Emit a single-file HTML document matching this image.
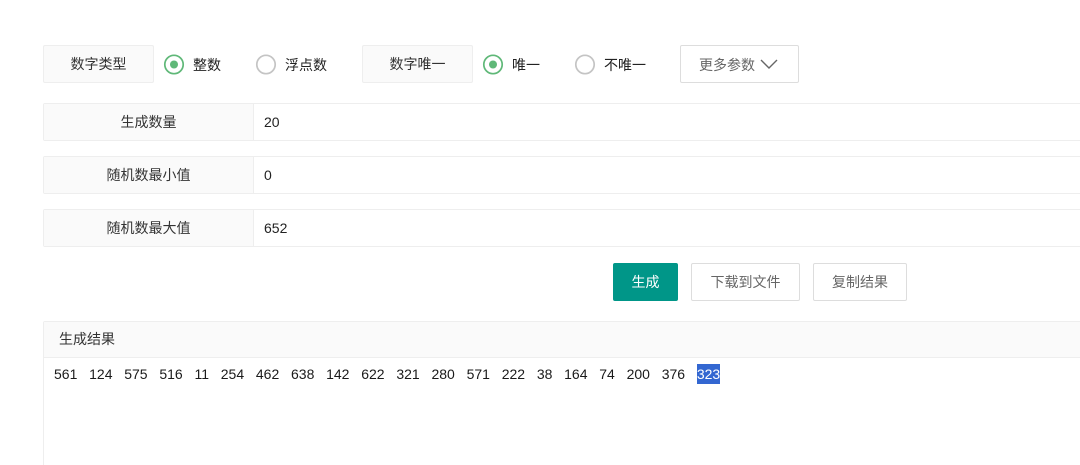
<!DOCTYPE html>
<html>
<head>
<meta charset="utf-8">
<style>
html,body{margin:0;padding:0;background:#fff;width:1080px;height:465px;overflow:hidden;}
body{position:relative;font-family:"Liberation Sans","Noto Sans CJK SC",sans-serif;font-size:14px;color:#333;}
#w{position:absolute;left:0;top:0;width:1080px;height:465px;overflow:hidden;}
.a{position:absolute;box-sizing:border-box;}
.lab{background:#fafafa;border:1px solid #eeeeee;border-radius:2px;text-align:center;height:38px;line-height:36px;color:#333;}
.row{left:43px;width:1050px;height:38px;border:1px solid #eeeeee;border-radius:2px;background:#fff;}
.row .l{position:absolute;left:0;top:0;width:210px;height:36px;background:#fafafa;border-right:1px solid #eeeeee;text-align:center;line-height:37px;box-sizing:border-box;}
.row .v{position:absolute;left:220px;top:0;line-height:37px;color:#222;}
.t{white-space:nowrap;line-height:20px;color:#222;}
.r{position:absolute;}
.btn{border:1px solid #dddddd;border-radius:2px;background:#fff;color:#666;text-align:center;height:38px;line-height:37px;}
</style>
</head>
<body>
<div id="w">
<div class="a lab" style="left:43px;top:45px;width:111px;">数字类型</div>
<svg class="r" style="left:163px;top:54px;" width="22" height="22" viewBox="0 0 22 22"><circle cx="11" cy="10.5" r="9.2" fill="#fff" stroke="#5fb878" stroke-width="1.7"/><circle cx="11" cy="10.5" r="4" fill="#5fb878"/></svg>
<div class="a t" style="left:193px;top:55px;">整数</div>
<svg class="r" style="left:255px;top:54px;" width="22" height="22" viewBox="0 0 22 22"><circle cx="11" cy="10.5" r="9.2" fill="#fff" stroke="#c4c4c4" stroke-width="1.7"/></svg>
<div class="a t" style="left:285px;top:55px;">浮点数</div>
<div class="a lab" style="left:362px;top:45px;width:111px;">数字唯一</div>
<svg class="r" style="left:481.5px;top:54px;" width="22" height="22" viewBox="0 0 22 22"><circle cx="11" cy="10.5" r="9.2" fill="#fff" stroke="#5fb878" stroke-width="1.7"/><circle cx="11" cy="10.5" r="4" fill="#5fb878"/></svg>
<div class="a t" style="left:512px;top:55px;">唯一</div>
<svg class="r" style="left:573.5px;top:54px;" width="22" height="22" viewBox="0 0 22 22"><circle cx="11" cy="10.5" r="9.2" fill="#fff" stroke="#c4c4c4" stroke-width="1.7"/></svg>
<div class="a t" style="left:604px;top:55px;">不唯一</div>
<div class="a btn" style="left:680px;top:45px;width:119px;text-align:left;padding-left:18px;line-height:38px;">更多参数
<svg style="position:absolute;left:79px;top:13px;" width="18" height="11" viewBox="0 0 18 11"><path d="M1 1 L9 9 L17 1" fill="none" stroke="#666" stroke-width="1.4"/></svg>
</div>

<div class="a row" style="top:103px;"><div class="l">生成数量</div><div class="v">20</div></div>
<div class="a row" style="top:156px;"><div class="l">随机数最小值</div><div class="v">0</div></div>
<div class="a row" style="top:209px;"><div class="l">随机数最大值</div><div class="v">652</div></div>

<div class="a btn" style="left:613px;top:263px;width:65px;background:#009688;border-color:#009688;color:#fff;">生成</div>
<div class="a btn" style="left:691px;top:263px;width:109px;">下载到文件</div>
<div class="a btn" style="left:813px;top:263px;width:94px;">复制结果</div>

<div class="a" style="left:43px;top:321px;width:1050px;height:160px;border:1px solid #eeeeee;border-radius:2px;">
  <div style="position:absolute;left:0;top:0;right:0;height:35px;background:#fafafa;border-bottom:1px solid #eeeeee;line-height:35px;padding-left:15px;">生成结果</div>
</div>
<div class="a" style="left:54px;top:364px;white-space:pre;line-height:20px;color:#1a1a1a;word-spacing:0.03px;">561   124   575   516   11   254   462   638   142   622   321   280   571   222   38   164   74   200   376   <span style="display:inline-block;height:20px;background:#3367d1;color:#fff;">323</span></div>
</div>
</body>
</html>
